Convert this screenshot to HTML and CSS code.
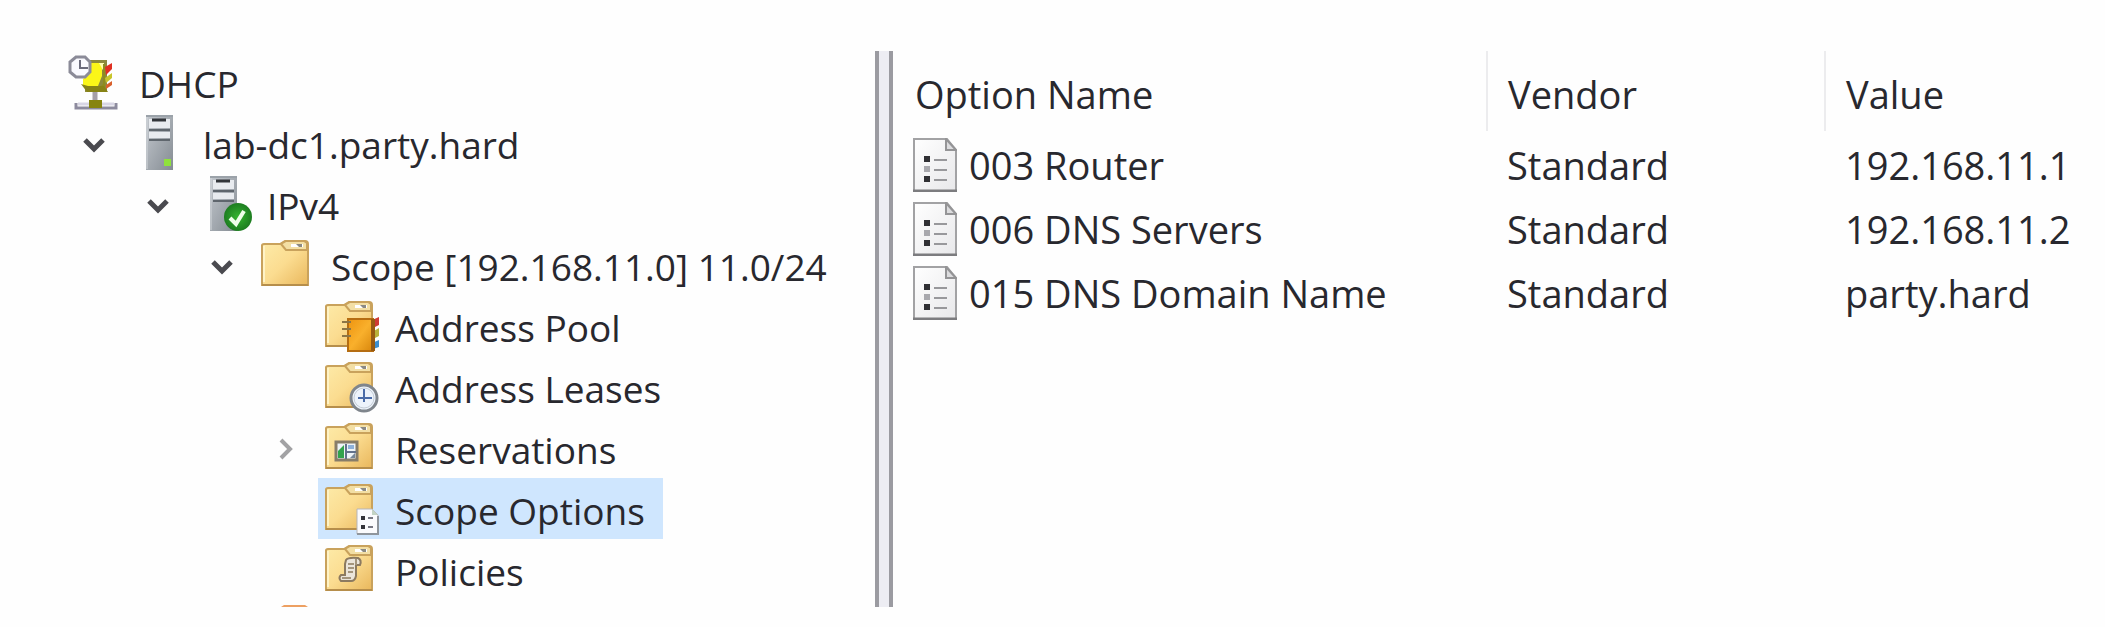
FILE: index.html
```html
<!DOCTYPE html>
<html lang="en">
<head>
<meta charset="utf-8">
<title>DHCP</title>
<link rel="stylesheet" href="styles.css">
</head>
<body>
<svg class="defs" aria-hidden="true">
  <defs>
    <linearGradient id="gold" x1="0" y1="0" x2="1" y2="1"><stop offset="0" stop-color="#fdeba9"/><stop offset=".5" stop-color="#fbdc90"/><stop offset="1" stop-color="#e9b75c"/></linearGradient>
    <linearGradient id="steel" x1="0" y1="0" x2="1" y2="1"><stop offset="0" stop-color="#c3c8ce"/><stop offset="1" stop-color="#858c93"/></linearGradient>
    <linearGradient id="paper" x1="0" y1="0" x2="1" y2="1"><stop offset="0" stop-color="#ffffff"/><stop offset="1" stop-color="#e8e8ea"/></linearGradient>
    <linearGradient id="amber" x1="0" y1="0" x2="1" y2="1"><stop offset="0" stop-color="#ee9410"/><stop offset=".5" stop-color="#f9b02c"/><stop offset="1" stop-color="#d8860c"/></linearGradient>
    <radialGradient id="green"><stop offset="0" stop-color="#35b52f"/><stop offset="1" stop-color="#1d7d20"/></radialGradient>
    <symbol id="folder" viewBox="0 0 56 56">
      <path d="M2 8.500Q2 7 4 7H20L25 4H45Q48 4 48 7V48H2Z" fill="url(#gold)" stroke="#c9a25c" stroke-width="2"/>
      <path d="M21 7L26 13H47V6L44 4H26Z" fill="#f3dfa4" stroke="#c9a25c" stroke-width="2"/>
      <path d="M31 7H43V10H31Z" fill="#fff"/><path d="M36 7H42V10H39Z" fill="#8b8a84"/>
      <path d="M4 9V45" stroke="#fff3c6" stroke-width="2"/><path d="M2 48H48" stroke="#b68e4b" stroke-width="2"/>
    </symbol>
    <symbol id="server" viewBox="0 0 56 56">
      <path d="M14 1H41V55H14Z" fill="url(#steel)"/><path d="M14 1H41" stroke="#9ba2a9" stroke-width="2"/>
      <path d="M17 4H38V13H17ZM17 17H38V23H17Z" fill="#e8ebef"/>
      <path d="M20 5H34" stroke="#32353a" stroke-width="3"/><path d="M17 15H38M17 25H38" stroke="#5f666d" stroke-width="2"/>
      <path d="M15 2V54" stroke="#d3d7db" stroke-width="1"/>
    </symbol>
    <symbol id="page" viewBox="0 0 44 54">
      <path d="M1 1H34L43 12V53H1Z" fill="url(#paper)" stroke="#a2a2a4" stroke-width="2"/>
      <path d="M0 53H44" stroke="#7c7c7f" stroke-width="3"/>
      <path d="M33 1V12H43Z" fill="#dcdcde" stroke="#949496" stroke-width="2"/>
      <path d="M11 18H17V24H11ZM11 38H17V44H11Z" fill="#303034"/><path d="M11 28H17V34H11Z" fill="#a8a8ad"/>
      <path d="M21 22H34M21 32H34M21 42H34" stroke="#98989b" stroke-width="2"/>
    </symbol>
    <symbol id="down" viewBox="0 0 24 24"><path d="M3 9L12 18L21 9" fill="none" stroke="#4a4a4f" stroke-width="5"/></symbol>
    <symbol id="right" viewBox="0 0 24 24"><path d="M7 4L16 13L7 22" fill="none" stroke="#a2a2a4" stroke-width="4"/></symbol>
  </defs>
</svg>
<main class="console">
  <nav class="tree-pane" aria-label="Console tree">
    <ul class="tree">
      <li>
        <div class="row"><a class="node" href="#dhcp">
          <svg class="icon" viewBox="0 0 56 56">
            <path d="M17 6H39V38H17Z" fill="#8d8a3c"/><path d="M22 9H34V22L30 32H15V25L22 19Z" fill="#fbf618"/><path d="M31 9H36V18Z" fill="#fffdb0"/>
            <path d="M35 10V30L31 34H37V10Z" fill="#8e8c20"/>
            <path d="M37 13L44 9V15L38 21Z" fill="#e03022"/><path d="M37 24L44 19V24L38 29Z" fill="#c8c52a"/><path d="M38 31L44 27V31L38 35Z" fill="#d9602c"/>
            <path d="M13 30L19 38H40L36 32H20Z" fill="#878316"/>
            <path d="M27 38V47" stroke="#a69fa8" stroke-width="5"/>
            <path d="M8 49V54H48V49" fill="none" stroke="#8d8b9e" stroke-width="3"/><path d="M10 50H46" stroke="#d8d6e4" stroke-width="3"/>
            <path d="M21 46H34V54H21Z" fill="#87840f"/>
            <path d="M8 3H17L22 8V18L17 23H8L2 18V8Z" fill="#fafaff" stroke="#8b8b98" stroke-width="3"/><path d="M12 6V14H20" fill="none" stroke="#6c6c7c" stroke-width="2"/>
          </svg><span>DHCP</span></a></div>
        <ul>
          <li>
            <div class="row"><button class="twisty" aria-label="Collapse lab-dc1.party.hard"><svg><use href="#down"/></svg></button><a class="node" href="#server">
              <svg class="icon" viewBox="0 0 56 56"><use href="#server"/><path d="M32 44H39V51H32Z" fill="#8fe23c"/></svg><span>lab-dc1.party.hard</span></a></div>
            <ul>
              <li>
                <div class="row"><button class="twisty" aria-label="Collapse IPv4"><svg><use href="#down"/></svg></button><a class="node" href="#ipv4">
                  <svg class="icon" viewBox="0 0 56 56"><use href="#server"/><circle cx="42" cy="41" r="14" fill="url(#green)"/><path d="M34 42L40 48L48 35" fill="none" stroke="#efffea" stroke-width="4"/></svg><span>IPv4</span></a></div>
                <ul>
                  <li>
                    <div class="row"><button class="twisty" aria-label="Collapse Scope"><svg><use href="#down"/></svg></button><a class="node" href="#scope"><svg class="icon"><use href="#folder"/></svg><span>Scope [192.168.11.0] 11.0/24</span></a></div>
                    <ul>
                      <li><div class="row leaf"><a class="node" href="#pool">
                        <svg class="icon" viewBox="0 0 56 56"><use href="#folder"/><path d="M48 22L55 19V27L49 30Z" fill="#cf3a34"/><path d="M48 34L55 30V38L49 41Z" fill="#b8b03a"/><path d="M48 45L55 42V49L49 51Z" fill="#3c8fd0"/><path d="M24 21H49V53H24Z" fill="url(#amber)" stroke="#b56d12" stroke-width="2"/><path d="M49 21V53" stroke="#965a12" stroke-width="4"/><path d="M18 24H27M18 31H27M18 38H27" stroke="#8b7546" stroke-width="2"/></svg><span>Address Pool</span></a></div></li>
                      <li><div class="row leaf"><a class="node" href="#leases">
                        <svg class="icon" viewBox="0 0 56 56"><use href="#folder"/><circle cx="40" cy="39" r="13" fill="#edf3fb" stroke="#7f858c" stroke-width="3"/><circle cx="40" cy="39" r="10" fill="none" stroke="#c4ccd5" stroke-width="1"/><path d="M40 30V43M34 39H48" fill="none" stroke="#4a6ba8" stroke-width="2"/></svg><span>Address Leases</span></a></div></li>
                      <li><div class="row"><button class="twisty" aria-label="Expand Reservations"><svg><use href="#right"/></svg></button><a class="node" href="#reservations">
                        <svg class="icon" viewBox="0 0 56 56"><use href="#folder"/><path d="M12 22H33V40H12Z" fill="#edf3f7" stroke="#877d69" stroke-width="3"/><path d="M14 31L20 25V38H14Z" fill="#32a34d"/><path d="M24 25H30V29H24Z" fill="#8eb1da"/><path d="M22 24V39M21 32H32" stroke="#62728c" stroke-width="2"/><path d="M26 38L31 33V38Z" fill="#768799"/></svg><span>Reservations</span></a></div></li>
                      <li><div class="row leaf"><a class="node selected" href="#options" aria-current="true">
                        <svg class="icon" viewBox="0 0 56 56"><use href="#folder"/><path d="M33 28H48L54 34V53H33Z" fill="#fbfbfd" stroke="#b5b5ba" stroke-width="1"/><path d="M33 53H54V35" fill="none" stroke="#8f959c" stroke-width="2"/><path d="M48 28V34H54Z" fill="#c3d4c5"/><path d="M37 35H41V39H37ZM37 44H41V48H37Z" fill="#33333a"/><path d="M44 37H49M44 46H49" stroke="#777782" stroke-width="2"/></svg><span>Scope Options</span></a></div></li>
                      <li><div class="row leaf"><a class="node" href="#policies">
                        <svg class="icon" viewBox="0 0 56 56"><use href="#folder"/><path d="M22 18Q24 15 34 16Q38 18 36 23H32V34Q31 39 27 39H17Q14 36 17 33H21V22Z" fill="#ebe5db" stroke="#8c7a60" stroke-width="2"/><path d="M24 22H30M24 26H30M24 30H29M18 36H27M32 17V23" stroke="#a4957d" stroke-width="2"/></svg><span>Policies</span></a></div></li>
                    </ul>
                  </li>
                  <li><div class="row leaf"><a class="node" href="#next" aria-label="Server options">
                    <svg class="icon" viewBox="0 0 56 56"><path d="M21 4L24 2H45L48 4V48H21Z" fill="#eda062"/></svg></a></div></li>
                </ul>
              </li>
            </ul>
          </li>
        </ul>
      </li>
    </ul>
  </nav>
  <div class="splitter" role="separator" aria-orientation="vertical"></div>
  <section class="list-pane" aria-label="Scope Options">
    <table>
      <colgroup><col class="col-name"><col class="col-vendor"><col></colgroup>
      <thead><tr><th scope="col">Option Name</th><th scope="col">Vendor</th><th scope="col">Value</th></tr></thead>
      <tbody>
        <tr><td><div class="option"><svg class="page"><use href="#page"/></svg>003 Router</div></td><td>Standard</td><td>192.168.11.1</td></tr>
        <tr><td><div class="option"><svg class="page"><use href="#page"/></svg>006 DNS Servers</div></td><td>Standard</td><td>192.168.11.2</td></tr>
        <tr><td><div class="option"><svg class="page"><use href="#page"/></svg>015 DNS Domain Name</div></td><td>Standard</td><td>party.hard</td></tr>
      </tbody>
    </table>
  </section>
</main>
</body>
</html>
```
FILE: styles.css
```css
* { box-sizing: border-box; }
body {
  margin: 0;
  background: #fefefe;
  color: #28282e;
  font-family: "Segoe UI", "Open Sans", "Noto Sans", sans-serif;
  font-size: 38px;
  line-height: 48px;
}
.defs { position: absolute; width: 0; height: 0; }
.console {
  display: grid;
  grid-template-columns: 875fr 18px 1212fr;
  height: 100vh;
  padding: 51px 0 20px;
}
.tree-pane, .list-pane { min-width: 0; overflow: hidden; }
.tree-pane { padding-left: 62px; font-size: 37px; }
ul { margin: 0; padding: 0; list-style: none; }
.tree ul ul { padding-left: 64px; }
.row { display: flex; height: 61px; }
.leaf { padding-left: 64px; }
.twisty {
  display: flex;
  align-items: center;
  justify-content: center;
  width: 64px;
  padding: 0;
  border: 0;
  background: none;
}
.twisty svg { width: 24px; height: 24px; }
.node {
  display: flex;
  align-items: center;
  gap: 15px;
  padding: 0 18px 0 6px;
  color: inherit;
  text-decoration: none;
  white-space: nowrap;
}
.node span { padding-top: 4px; }
.selected { background: #cfe6fe; }
.icon { width: 56px; height: 56px; flex: none; }
.splitter {
  background: #ededf3;
  border: solid #9b9ba1;
  border-width: 0 4px;
}
table { width: 100%; table-layout: fixed; border-collapse: collapse; }
.col-name { width: 594px; }
.col-vendor { width: 338px; }
th, td { padding: 0 0 0 20px; text-align: left; font-weight: 400; white-space: nowrap; }
th { height: 80px; padding-top: 6px; border-right: 2px solid #ececee; }
th:first-child { padding-left: 22px; }
th:last-child { border-right: 0; }
td { height: 64px; padding-top: 4px; }
.option { display: flex; align-items: center; gap: 12px; }
.page { width: 44px; height: 54px; }
```
